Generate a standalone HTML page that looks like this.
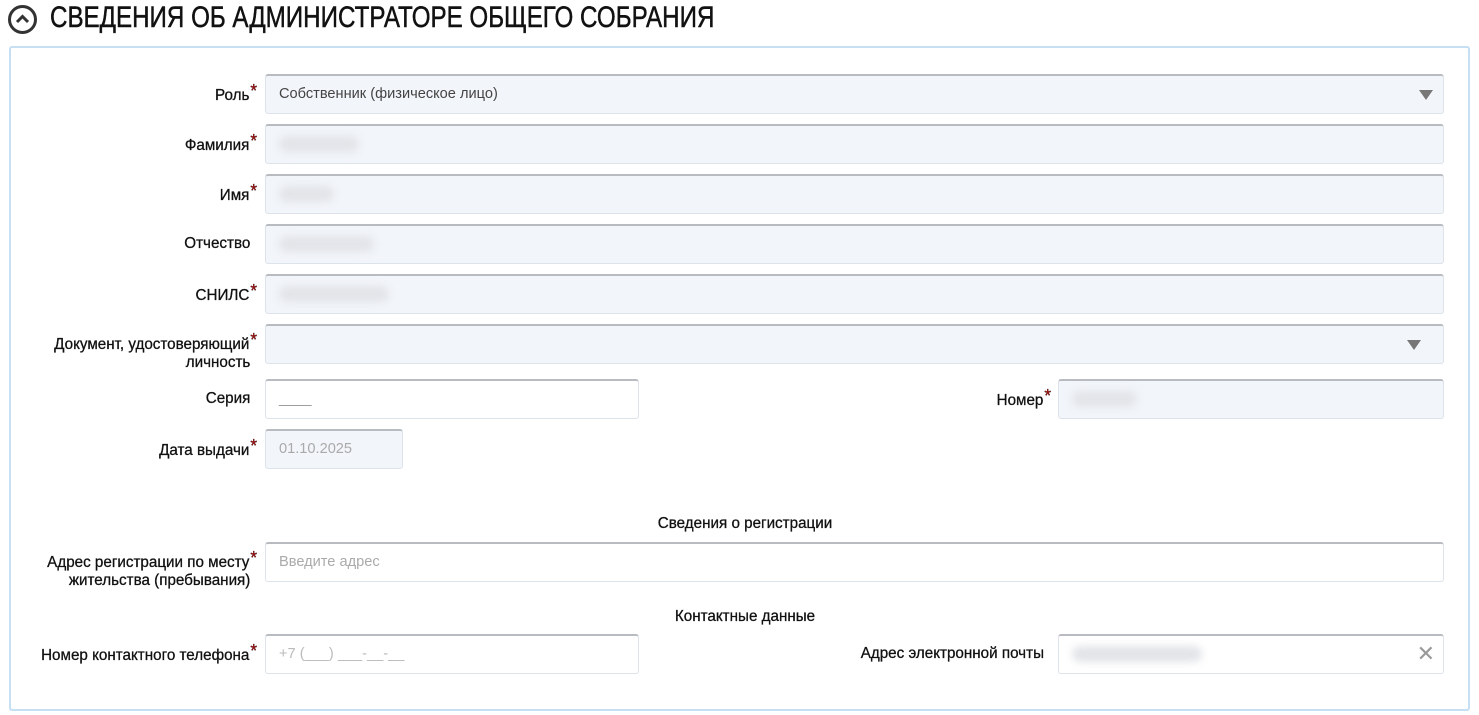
<!DOCTYPE html>
<html><head><meta charset="utf-8"><style>
*{box-sizing:border-box;margin:0;padding:0}
body{width:1479px;height:715px;background:#fff;position:relative;overflow:hidden;font-family:"Liberation Sans",sans-serif;color:#111}
.h{position:absolute;left:50px;top:1px;font-size:30px;line-height:34px;transform:scaleX(0.805);transform-origin:left;white-space:nowrap;-webkit-text-stroke:0.5px #111}
.ic{position:absolute;left:8px;top:5px;width:29px;height:29px;border:3px solid #333;border-radius:50%}
.panel{position:absolute;left:9px;top:46px;width:1461px;height:665px;border:2px solid #c6dff3;border-radius:3px}
.l{position:absolute;right:1222px;font-size:16px;text-align:right;line-height:18px;width:330px;transform:scaleX(0.95);transform-origin:right;-webkit-text-stroke:0.3px #111}
.s{color:#b00;font-size:18px;position:relative;top:-3px;margin-left:1px}
.n{margin-right:7px}
.i{position:absolute;height:40px;background:#f2f5fa;border:1px solid #dde3ea;border-top:2px solid #b8bcc0;border-radius:3px;font-family:"Liberation Sans",sans-serif;font-size:14.6px;color:#444;padding:10px 13px}
.w{background:#fff}
.blur{display:inline-block;height:16px;background:#e2e4e8;filter:blur(4px);border-radius:8px}
.ar{position:absolute;right:10px;top:14px;width:0;height:0;border-left:7px solid transparent;border-right:7px solid transparent;border-top:10px solid #777}
.c{position:absolute;font-size:16px;text-align:center;width:400px;transform:scaleX(0.95);-webkit-text-stroke:0.3px #111}
</style></head><body>
<div class="ic"><svg width="23" height="23" viewBox="0 0 23 23" style="position:absolute;left:0;top:0"><path d="M6 14 L11.5 8.5 L17 14" stroke="#333" stroke-width="3" fill="none"/></svg></div>
<div class="h">СВЕДЕНИЯ ОБ АДМИНИСТРАТОРЕ ОБЩЕГО СОБРАНИЯ</div>
<div class="panel"></div>

<div class="l" style="top:85px">Роль<span class="s">*</span></div>
<div class="i" style="left:265px;top:74px;width:1179px">Собственник (физическое лицо)<div class="ar"></div></div>

<div class="l" style="top:135px">Фамилия<span class="s">*</span></div>
<div class="i" style="left:265px;top:124px;width:1179px"><span class="blur" style="width:80px"></span></div>

<div class="l" style="top:185px">Имя<span class="s">*</span></div>
<div class="i" style="left:265px;top:174px;width:1179px"><span class="blur" style="width:55px"></span></div>

<div class="l" style="top:235px"><span class="n">Отчество</span></div>
<div class="i" style="left:265px;top:224px;width:1179px"><span class="blur" style="width:95px"></span></div>

<div class="l" style="top:285px">СНИЛС<span class="s">*</span></div>
<div class="i" style="left:265px;top:274px;width:1179px"><span class="blur" style="width:110px"></span></div>

<div class="l" style="top:334px">Документ, удостоверяющий<span class="s">*</span><br><span class="n">личность</span></div>
<div class="i" style="left:265px;top:324px;width:1179px"><div class="ar" style="right:22px"></div></div>

<div class="l" style="top:390px"><span class="n">Серия</span></div>
<div class="i w" style="left:265px;top:379px;width:374px;color:#999">____</div>
<div class="l" style="top:390px;right:428px">Номер<span class="s">*</span></div>
<div class="i" style="left:1058px;top:379px;width:386px"><span class="blur" style="width:65px"></span></div>

<div class="l" style="top:440px">Дата выдачи<span class="s">*</span></div>
<div class="i" style="left:265px;top:429px;width:138px;color:#aaa">01.10.2025</div>

<div class="c" style="left:545px;top:515px">Сведения о регистрации</div>
<div class="l" style="top:552px">Адрес регистрации по месту<span class="s">*</span><br><span class="n">жительства (пребывания)</span></div>
<div class="i w" style="left:265px;top:542px;width:1179px;color:#aaa">Введите адрес</div>

<div class="c" style="left:545px;top:608px">Контактные данные</div>
<div class="l" style="top:645px">Номер контактного телефона<span class="s">*</span></div>
<div class="i w" style="left:265px;top:634px;width:374px;color:#bbb">+7 (___) ___-__-__</div>
<div class="l" style="top:645px;right:435px">Адрес электронной почты</div>
<div class="i w" style="left:1058px;top:634px;width:386px"><span class="blur" style="width:130px"></span><span style="position:absolute;right:8px;top:7px;color:#999;font-size:22px;line-height:22px">✕</span></div>
</body></html>
